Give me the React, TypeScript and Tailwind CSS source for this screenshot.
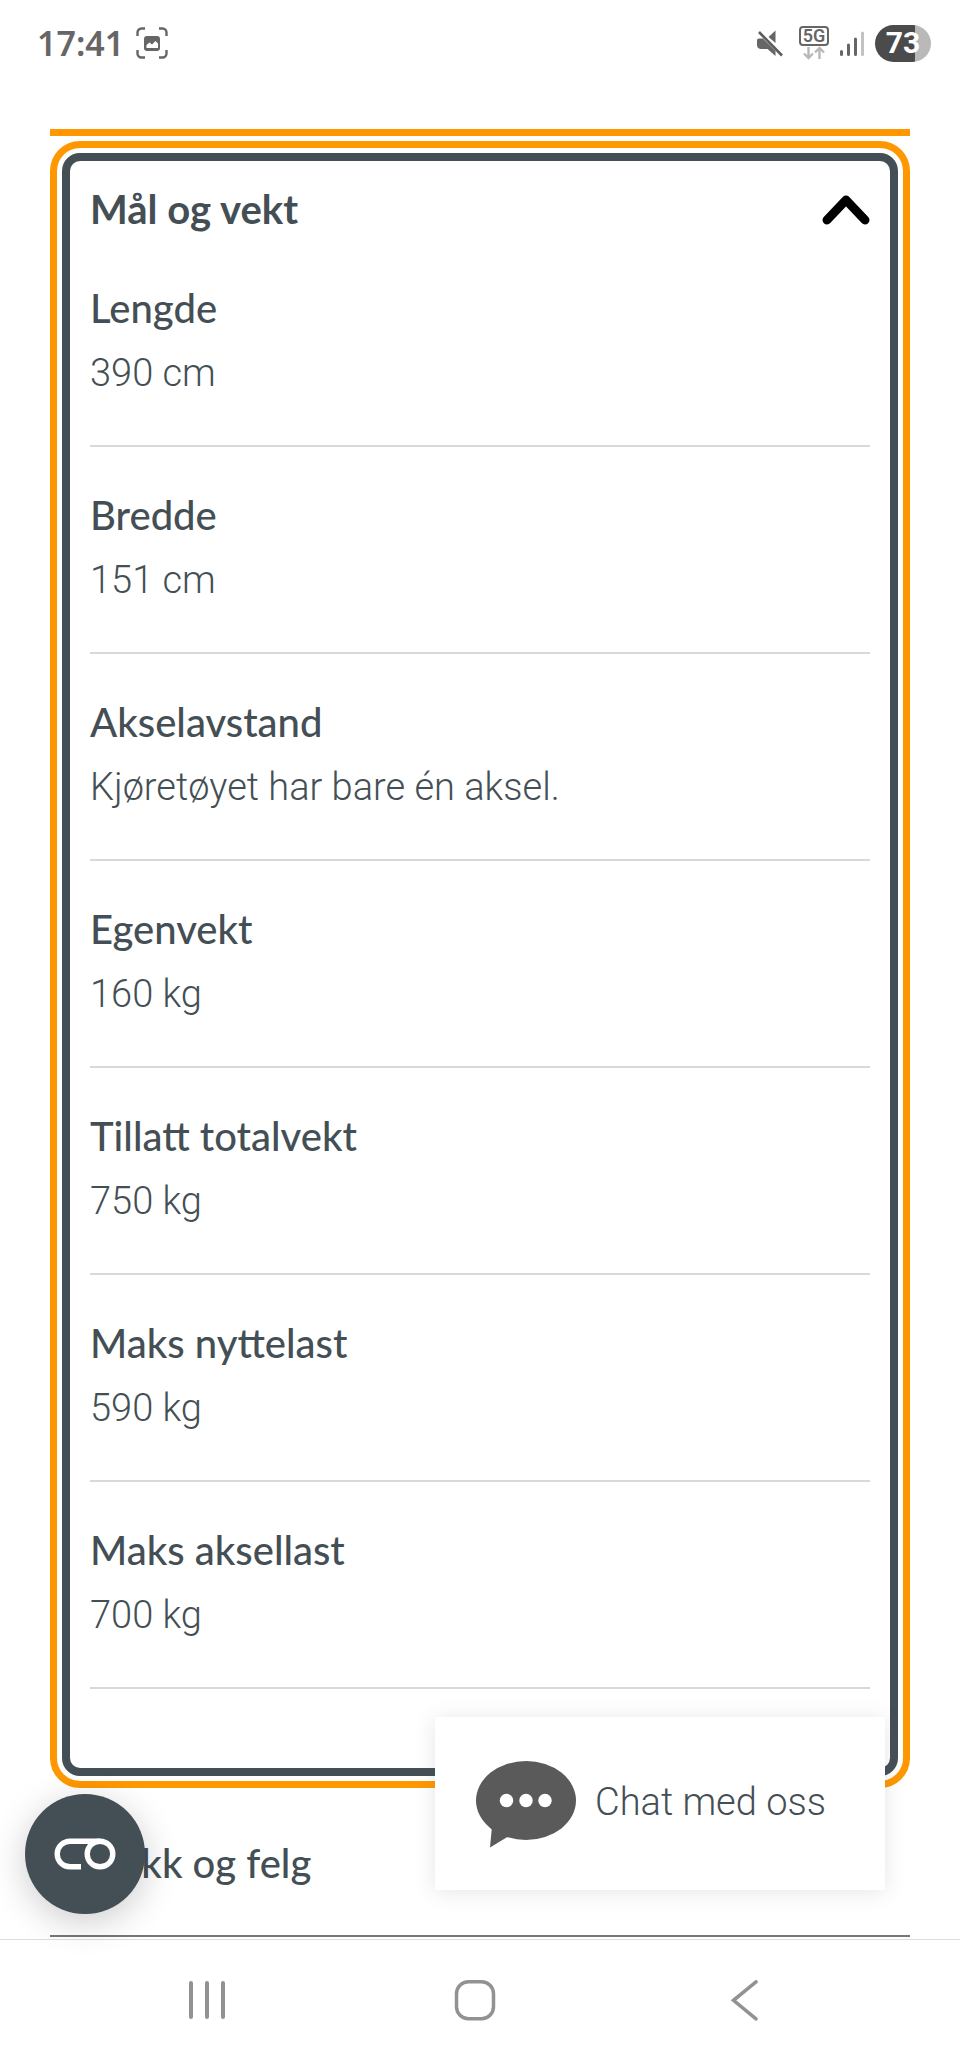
import { useState } from 'react';

type Measurement = {
  label: string;
  value: string;
};

const measurements: Measurement[] = [
  { label: 'Lengde', value: '390 cm' },
  { label: 'Bredde', value: '151 cm' },
  { label: 'Akselavstand', value: 'Kjøretøyet har bare én aksel.' },
  { label: 'Egenvekt', value: '160 kg' },
  { label: 'Tillatt totalvekt', value: '750 kg' },
  { label: 'Maks nyttelast', value: '590 kg' },
  { label: 'Maks aksellast', value: '700 kg' },
];

function StatusBar() {
  return (
    <header className="flex h-[86px] items-center justify-between pl-[37px] pr-[29px]">
      <div className="flex items-center gap-3 text-[#666666]">
        <span className="font-['Noto_Sans',sans-serif] text-[34px] font-semibold leading-10">17:41</span>
        <svg className="h-8 w-8" viewBox="0 0 32 32" fill="none" aria-hidden="true">
          <path
            d="M1.5 9V5.5a4 4 0 0 1 4-4H9M23 1.5h3.500a4 4 0 0 1 4 4V9M30.500 23v3.500a4 4 0 0 1-4 4H23M9 30.500H5.500a4 4 0 0 1-4-4V23"
            stroke="currentColor"
            strokeWidth="2.4"
          />
          <rect x="8" y="9" width="16" height="15" rx="3" fill="currentColor" />
          <path d="M10.500 21v-3l3-2.500 2.500 2 3.500-3.500 2.500 2.500V21Z" fill="white" />
        </svg>
      </div>

      <div className="flex items-center gap-[11px]">
        <svg className="mr-1 h-7 w-7" viewBox="0 0 28 28" aria-hidden="true">
          <path d="M1 11q0-1.500 2-1.500h4L19.500 22v5l-8-7H4.500Q1 19.500 1 16Z" fill="#666666" />
          <path d="M19.500 1.500V14L12.500 8Z" fill="#666666" />
          <path d="m3 3 23 23.500" stroke="#5c5c5c" strokeWidth="2.6" />
        </svg>
        <div className="flex flex-col items-center">
          <span className="flex h-5 w-[30px] items-center justify-center rounded border-2 border-[#666666] font-['Roboto',sans-serif] text-[18px] font-semibold leading-none text-[#666666]">
            5G
          </span>
          <svg className="h-[14px] w-[22px]" viewBox="0 0 22 14" fill="none" stroke="#b8b8b8" strokeWidth="2.4" aria-hidden="true">
            <path d="M5.500 1v11M1 7.500l4.500 4.500 4.500-4.500M16.500 13V2M12 6.500 16.500 2 21 6.500" />
          </svg>
        </div>
        <svg className="h-7 w-6" viewBox="0 0 24 28" strokeWidth="3" strokeLinecap="round" aria-hidden="true">
          <path d="M1.500 25.500v-3M8.500 25.500V16M15.500 25.500V10" stroke="#666666" />
          <path d="M22.500 25.500V4" stroke="#c2c2c2" />
        </svg>
        <span className="flex h-[37px] w-14 items-center justify-center rounded-full bg-linear-to-r from-[#4b4b4b] from-72% to-[#b9b9b9] to-72% font-['Roboto',sans-serif] text-[30px] font-bold leading-none text-white">
          73
        </span>
      </div>
    </header>
  );
}

function ChatButton() {
  return (
    <button
      type="button"
      className="absolute bottom-[49px] right-[75px] flex h-[173px] w-[450px] items-center gap-[18px] bg-white pl-10 shadow-[0_2px_20px_rgba(70,80,85,0.14)]"
    >
      <svg className="h-[88px] w-[102px]" viewBox="0 0 102 88" aria-hidden="true">
        <ellipse cx="51" cy="40.500" rx="50" ry="39.500" fill="#5a5a5a" />
        <path d="M17 66 15 87.500 34 76Z" fill="#5a5a5a" />
        <g fill="white">
          <circle cx="31.500" cy="40.500" r="6.700" />
          <circle cx="51" cy="40.500" r="6.700" />
          <circle cx="70" cy="40.500" r="6.700" />
        </g>
      </svg>
      <span className="pb-1 font-['Roboto',sans-serif] text-[38px] font-light leading-[64px]">Chat med oss</span>
    </button>
  );
}

function CookieButton() {
  return (
    <button
      type="button"
      aria-label="Innstillinger for informasjonskapsler"
      className="absolute bottom-[25px] left-[25px] flex size-30 items-center justify-center rounded-full bg-[#444f55] shadow-[0_8px_36px_rgba(0,0,0,0.2)]"
    >
      <svg className="h-8 w-[62px]" viewBox="0 0 62 32" fill="none" stroke="white" strokeWidth="5.400" aria-hidden="true">
        <path d="M46 3.200H16a12.800 12.800 0 0 0 0 25.600h11" />
        <circle cx="46" cy="16" r="12.800" />
      </svg>
    </button>
  );
}

function NavigationBar() {
  return (
    <nav className="grid h-[120px] grid-cols-3 border-t border-[#dedede] bg-white pl-[73px] pr-[82px] pt-10">
      <button type="button" aria-label="Recent apps" className="flex justify-center">
        <svg className="size-[42px]" viewBox="0 0 42 42" stroke="#929292" strokeWidth="4" strokeLinecap="round" aria-hidden="true">
          <path d="M5 3v34M21 3v34M37 3v34" />
        </svg>
      </button>
      <button type="button" aria-label="Home" className="flex justify-center">
        <svg className="size-[42px]" viewBox="0 0 42 42" fill="none" stroke="#929292" strokeWidth="3.500" aria-hidden="true">
          <rect x="2.500" y="1.800" width="37" height="37" rx="12" />
        </svg>
      </button>
      <button type="button" aria-label="Back" className="flex justify-center">
        <svg className="size-[42px]" viewBox="0 0 42 42" fill="none" stroke="#929292" strokeWidth="3.500" strokeLinecap="round" aria-hidden="true">
          <path d="M33 1.800 10.500 20.300 33 38.800" />
        </svg>
      </button>
    </nav>
  );
}

export default function App() {
  const [open, setOpen] = useState(true);

  return (
    <div className="flex min-h-screen flex-col bg-white font-['Lato',sans-serif] text-[#444f55]">
      <StatusBar />

      <main className="relative grow px-[50px] pb-[2px] pt-[43px]">
        <div className="mb-[5px] h-[7px] bg-[#ff9800]" />

        <section className="rounded-[30px] border-[7px] border-[#ff9800] p-[5px]">
          <div className="rounded-[18px] border-8 border-[#444f55] px-5 pb-[79px]">
            <h2>
              <button
                type="button"
                aria-expanded={open}
                onClick={() => setOpen(!open)}
                className="flex h-[79px] w-full items-center justify-between pt-4 text-left text-[40px] font-bold leading-[64px]"
              >
                Mål og vekt
                <svg
                  className={open ? 'h-8 w-12' : 'h-8 w-12 rotate-180'}
                  viewBox="0 0 48 32"
                  fill="none"
                  stroke="black"
                  strokeWidth="9"
                  strokeLinecap="round"
                  strokeLinejoin="round"
                  aria-hidden="true"
                >
                  <path d="M5 27 24 7l19 20" />
                </svg>
              </button>
            </h2>

            {open && (
              <dl>
                {measurements.map((item) => (
                  <div key={item.label} className="border-b-2 border-[#d9d9d9] pb-[39px] pt-9">
                    <dt className="text-[40px] font-medium leading-[64px]">{item.label}</dt>
                    <dd className="font-['Roboto',sans-serif] text-[38px] font-light leading-[66px]">{item.value}</dd>
                  </div>
                ))}
              </dl>
            )}
          </div>
        </section>

        <h2 className="border-b-2 border-[#777777]">
          <button type="button" aria-expanded="false" className="w-full px-10 pb-10 pt-[43px] text-left text-[40px] font-medium leading-[64px]">
            Dekk og felg
          </button>
        </h2>

        <ChatButton />
        <CookieButton />
      </main>

      <NavigationBar />
    </div>
  );
}
